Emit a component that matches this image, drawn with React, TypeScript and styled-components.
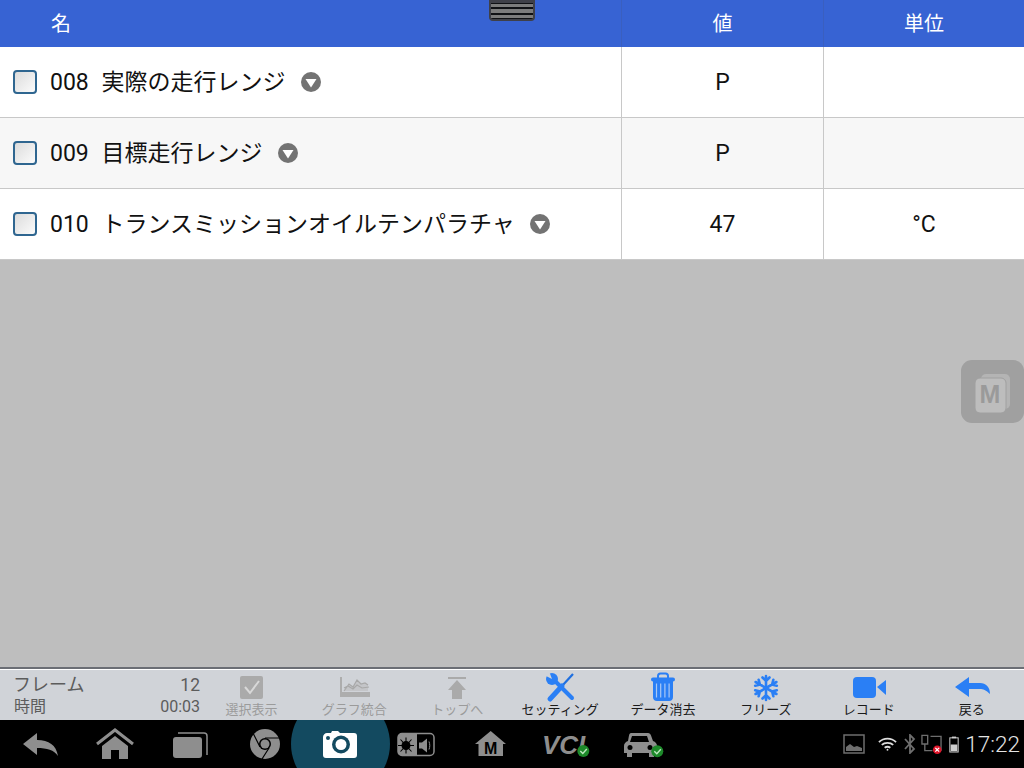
import React from 'react';
import styled, { createGlobalStyle } from 'styled-components';

const GlobalStyle = createGlobalStyle`
  html, body { margin: 0; padding: 0; }
  body {
    width: 1024px;
    height: 768px;
    overflow: hidden;
    font-family: Roboto, "Noto Sans CJK JP", sans-serif;
  }
`;

const Screen = styled.div`
  position: relative;
  width: 1024px;
  height: 768px;
  display: flex;
  flex-direction: column;
  background: #bebebe;
  overflow: hidden;
`;

const COLS = '621px 202px 201px';

const HeaderRow = styled.div`
  display: grid;
  grid-template-columns: ${COLS};
  height: 47px;
  background: #3763d3;
  color: #fff;
  font-size: 20px;
  line-height: 49px;
`;

const HeaderName = styled.div`
  padding-left: 51px;
`;

const HeaderCell = styled.div`
  text-align: center;
  border-left: 1px solid #3a5fbf;
`;

const Handle = styled.div`
  position: absolute;
  left: 489px;
  top: 0;
  width: 46px;
  height: 21px;
  box-sizing: border-box;
  border: solid #3f4048;
  border-width: 3px 2px 2px;
  border-radius: 0 0 4px 4px;
  background: #101114;
  padding: 1px 0;
  display: flex;
  flex-direction: column;
  gap: 2px;
`;

const HandleBar = styled.div`
  flex: 1;
  background: #7c7c7c;
`;

const Row = styled.div<{ $alt?: boolean }>`
  display: grid;
  grid-template-columns: ${COLS};
  height: 71px;
  box-sizing: border-box;
  background: ${p => (p.$alt ? '#f7f7f7' : '#fff')};
  border-bottom: 1px solid #c8c8c8;
  color: #111;
  font-size: 23px;
`;

const NameCell = styled.div`
  display: flex;
  align-items: center;
  padding-left: 13px;
`;

const Check = styled.div`
  width: 24px;
  height: 24px;
  box-sizing: border-box;
  border: 2px solid #2f6690;
  border-radius: 4px;
  background: linear-gradient(135deg, #dcdcdc, #fbfbfb);
  margin-right: 13px;
`;

const RowText = styled.div`
  display: flex;
  align-items: baseline;
  line-height: 30px;
  padding-top: 1px;
`;

const Num = styled.span`
  width: 51.5px;
  white-space: nowrap;
`;

const Label = styled.span`
  white-space: nowrap;
`;

const Drop = styled.svg`
  width: 20px;
  height: 20px;
  margin-left: 15px;
`;

const ValueCell = styled.div`
  display: flex;
  align-items: center;
  justify-content: center;
  border-left: 1px solid #c8c8c8;
  padding-top: 1px;
`;

const Floater = styled.div`
  position: absolute;
  left: 961px;
  top: 360px;
  width: 63px;
  height: 63px;
  border-radius: 11px;
  background: #a0a0a0;
`;

const FloaterLetter = styled.text`
  font-family: "Liberation Sans", sans-serif;
  font-weight: 700;
  font-size: 25px;
  fill: #9a9a9a;
`;

const Spacer = styled.div`
  flex: 1;
`;

const Toolbar = styled.div`
  height: 53px;
  box-sizing: border-box;
  display: flex;
  background: #d0d3d8;
  border-top: 2px solid #6b6e75;
  box-shadow: inset 0 1px 0 #fff;
  padding-top: 1px;
`;

const Stats = styled.div`
  width: 200px;
  box-sizing: border-box;
  padding: 4px 0 0 14px;
  display: grid;
  grid-template-columns: 1fr auto;
  grid-auto-rows: 22px;
  line-height: 22px;
  align-items: center;
  color: #5c5c5c;
  font-size: 16px;
`;

const StatTitle = styled.span`
  font-size: 18px;
  margin-left: -1px;
`;

const StatValue = styled.span<{ $big?: boolean }>`
  justify-self: end;
  font-size: ${p => (p.$big ? '17.5px' : '16px')};
`;

const Tool = styled.div<{ $off?: boolean }>`
  width: 102.9px;
  display: flex;
  flex-direction: column;
  align-items: center;
  color: ${p => (p.$off ? '#9b9b9b' : '#1a1a1a')};
  font-size: 13px;
  line-height: 15px;
  white-space: nowrap;
`;

const ToolIcon = styled.svg`
  width: 36px;
  height: 30px;
  margin-top: 2px;
  overflow: visible;
`;

const NavBar = styled.div`
  height: 48px;
  background: #000;
  display: flex;
  align-items: center;
  position: relative;
  overflow: hidden;
  padding-left: 2.5px;
  color: #8e8e8e;
`;

const NavSlot = styled.div`
  width: 75px;
  height: 48px;
  display: flex;
  align-items: center;
  justify-content: center;
  position: relative;
`;

const Glow = styled.div`
  position: absolute;
  left: 291px;
  top: -26px;
  width: 99px;
  height: 100px;
  border-radius: 50%;
  background: #134a60;
`;

const NavIcon = styled.svg`
  width: 44px;
  height: 36px;
  position: relative;
  overflow: visible;
`;

const NavText = styled.text<{ $size: number; $italic?: boolean }>`
  font-family: "Liberation Sans", sans-serif;
  font-weight: 700;
  font-size: ${p => p.$size}px;
  font-style: ${p => (p.$italic ? 'italic' : 'normal')};
`;

const Status = styled.div`
  margin-left: auto;
  display: flex;
  align-items: center;
  padding-right: 4px;
  color: #8a8a8a;
`;

const StatusIcon = styled.svg<{ $left: number }>`
  margin-left: ${p => p.$left}px;
`;

const Clock = styled.span`
  color: #e4e4e4;
  font-size: 22.5px;
  font-weight: 300;
  margin-left: 6px;
`;

const rows = [
  { num: '008', name: '実際の走行レンジ', value: 'P', unit: '' },
  { num: '009', name: '目標走行レンジ', value: 'P', unit: '' },
  { num: '010', name: 'トランスミッションオイルテンパラチャ', value: '47', unit: '°C' },
];

const BLUE = '#2a7ff5';
const TOOL_BG = '#d0d3d8';

export default function App() {
  return (
    <Screen>
      <GlobalStyle />
      <HeaderRow>
        <HeaderName>名</HeaderName>
        <HeaderCell>値</HeaderCell>
        <HeaderCell>単位</HeaderCell>
      </HeaderRow>
      {rows.map((r, i) => (
        <Row key={r.num} $alt={i === 1}>
          <NameCell>
            <Check />
            <RowText>
              <Num>{r.num}</Num>
              <Label>{r.name}</Label>
            </RowText>
            <Drop viewBox="0 0 20 20">
              <circle cx="10" cy="10" r="10" fill="#737373" />
              <path d="M4.500 7h11L10 15.500z" fill="#fff" />
            </Drop>
          </NameCell>
          <ValueCell>{r.value}</ValueCell>
          <ValueCell>{r.unit}</ValueCell>
        </Row>
      ))}
      <Spacer />
      <Toolbar>
        <Stats>
          <StatTitle>フレーム</StatTitle>
          <StatValue $big>12</StatValue>
          <span>時間</span>
          <StatValue>00:03</StatValue>
        </Stats>
        <Tool $off>
          <ToolIcon viewBox="0 0 36 30">
            <rect x="7" y="4" width="23" height="23" rx="2" fill="#aaa" />
            <path d="M12 15l5 6 9-12" fill="none" stroke="#d8d8d8" strokeWidth="2" />
          </ToolIcon>
          選択表示
        </Tool>
        <Tool $off>
          <ToolIcon viewBox="0 0 36 30">
            <path d="M4 5h2v15h28v5H4z" fill="#adadad" />
            <path d="M8 19l5-7 4 3 4-7 4 4 4-1 3 2v6z" fill="#c4c5c8" />
            <path d="M8 19l5-7 4 3 4-7 4 4 4-1 3 2M8 16l4-2 5 3 4-4 5 3 7-1" fill="none" stroke="#a8a8a8" strokeWidth="1.200" />
          </ToolIcon>
          グラフ統合
        </Tool>
        <Tool $off>
          <ToolIcon viewBox="0 0 36 30">
            <path d="M9 5h18v2H9zM18 8l9 10h-4v9H13v-9H9z" fill="#aaa" />
          </ToolIcon>
          トップへ
        </Tool>
        <Tool>
          <ToolIcon viewBox="0 0 36 30">
            <path d="M31 2L20 14" stroke="#1f6fe0" strokeWidth="2.200" />
            <path d="M20 14L8 27" stroke={BLUE} strokeWidth="5" strokeLinecap="round" />
            <path d="M14 10l16 16" stroke={BLUE} strokeWidth="4" strokeLinecap="round" />
            <circle cx="10" cy="7" r="6" fill={BLUE} />
            <path d="M10 7L7-1 2 3z" fill={TOOL_BG} />
          </ToolIcon>
          セッティング
        </Tool>
        <Tool>
          <ToolIcon viewBox="0 0 36 30">
            <path d="M13 7V4c0-1.500 1-2.500 2.500-2.500h5c1.500 0 2.500 1 2.500 2.500v3" fill="none" stroke={BLUE} strokeWidth="2" />
            <rect x="6" y="5.500" width="24" height="4" rx="2" fill={BLUE} />
            <path d="M8 9h20v16c0 2.500-1.500 4-4 4H12c-2.500 0-4-1.500-4-4z" fill={BLUE} />
            <path d="M11.500 11.500v14M15.700 11.500v14M19.900 11.500v14M24.100 11.500v14" stroke="#a8c8f5" strokeWidth="1.200" />
          </ToolIcon>
          データ消去
        </Tool>
        <Tool>
          <ToolIcon viewBox="0 0 36 30">
            <g stroke={BLUE} strokeWidth="2.600" fill="none" strokeLinecap="round">
              {[0, 60, 120].map(a => (
                <g key={a} transform={`rotate(${a} 18 16)`}>
                  <path d="M18 4v24M14.500 5.500l3.500 3.500 3.500-3.500M14.500 26.500l3.500-3.500 3.500 3.500" />
                </g>
              ))}
            </g>
          </ToolIcon>
          フリーズ
        </Tool>
        <Tool>
          <ToolIcon viewBox="0 0 36 30">
            <rect x="2" y="5" width="23" height="21" rx="4" fill={BLUE} />
            <path d="M26 15l9-7v15z" fill={BLUE} />
          </ToolIcon>
          レコード
        </Tool>
        <Tool>
          <ToolIcon viewBox="0 0 36 30">
            <path d="M1 15L15 5v6h11c6 0 10 4 10 11-4-4-7-5-10-5H15v8z" fill={BLUE} />
          </ToolIcon>
          戻る
        </Tool>
      </Toolbar>
      <NavBar>
        <Glow />
        <NavSlot>
          <NavIcon viewBox="0 0 44 36">
            <path d="M5 18L19 7v7c12 0 19 5 21 16-4-6-11-8-21-8v7z" fill="currentColor" />
          </NavIcon>
        </NavSlot>
        <NavSlot>
          <NavIcon viewBox="0 0 44 36">
            <path d="M4 18L22 4l18 14" fill="none" stroke="currentColor" strokeWidth="3" />
            <path d="M22 10l13 10v13H26v-9h-8v9H9V20z" fill="currentColor" />
          </NavIcon>
        </NavSlot>
        <NavSlot>
          <NavIcon viewBox="0 0 44 36">
            <rect x="5" y="11" width="29" height="21" rx="3" fill="currentColor" />
            <path d="M10 7h26c2 0 3 1 3 3v19" fill="none" stroke="currentColor" strokeWidth="1.500" />
          </NavIcon>
        </NavSlot>
        <NavSlot>
          <NavIcon viewBox="0 0 44 36">
            <circle cx="22" cy="18" r="15" fill="currentColor" />
            <circle cx="22" cy="18" r="6" fill="#000" />
            <circle cx="22" cy="18" r="4.500" fill="currentColor" />
            <path d="M22 12h14M17 21L10 7M26 22l-7 11" stroke="#000" strokeWidth="1.200" />
          </NavIcon>
        </NavSlot>
        <NavSlot>
          <NavIcon viewBox="0 0 44 36">
            <path d="M9 7h4l1-2h6l2 2h14c2 0 3 1 3 3v19c0 2-1 3-3 3H8c-2 0-3-1-3-3V11c0-2 2-4 4-4z" fill="#fff" />
            <circle cx="23" cy="18.500" r="9" fill="#134a60" />
            <circle cx="23" cy="18.500" r="5.500" fill="#fff" />
            <circle cx="10" cy="12" r="2" fill="#134a60" />
          </NavIcon>
        </NavSlot>
        <NavSlot>
          <NavIcon viewBox="0 0 44 36">
            <rect x="5" y="7.500" width="36" height="22" rx="4" fill="#000" stroke="currentColor" strokeWidth="1.500" />
            <path d="M9 7.500h15v22H9a4 4 0 0 1-4-4v-14a4 4 0 0 1 4-4z" fill="currentColor" />
            <path d="M13 11.500v16M5 19.500h16M7.500 13.500l11 12M18.500 13.500l-11 12" stroke="#000" strokeWidth="1.100" />
            <circle cx="13" cy="19.500" r="4.500" fill="#000" />
            <path d="M26 16.500h3l5-4v14l-5-4h-3z" fill="currentColor" />
            <path d="M36 15.500c1 2.500 1 5.500 0 8" fill="none" stroke="currentColor" strokeWidth="1" />
          </NavIcon>
        </NavSlot>
        <NavSlot>
          <NavIcon viewBox="0 0 44 36">
            <path d="M22.700 5L38 18h-3v12H10.500V18H7z" fill="currentColor" />
            <NavText $size={16} x="22.700" y="28" textAnchor="middle" fill="#000">M</NavText>
          </NavIcon>
        </NavSlot>
        <NavSlot>
          <NavIcon viewBox="0 0 44 36">
            <NavText $size={26} $italic x="-1" y="28" fill="currentColor">VCI</NavText>
            <circle cx="40.300" cy="25" r="6" fill="#1d8a2a" />
            <path d="M37.300 25l2.500 2.500 4-4.500" fill="none" stroke="#bfe8c0" strokeWidth="1.400" />
          </NavIcon>
        </NavSlot>
        <NavSlot>
          <NavIcon viewBox="0 0 44 36">
            <path d="M13 7h17c1.500 0 2.500 1 3 2.500l2 5.500c2.500 1 4 2.500 4 5v7h-3v4h-5v-4H14v4H9v-4H6v-7c0-2.500 1.500-4 4-5l1-5.500C11.300 8 12 7 13 7z" fill="currentColor" />
            <path d="M14 10h15l2 6H12z" fill="#000" />
            <circle cx="12" cy="21.500" r="2.500" fill="#000" />
            <circle cx="32" cy="21.500" r="2.500" fill="#000" />
            <circle cx="39.300" cy="25.300" r="6" fill="#1d8a2a" />
            <path d="M36.300 25.300l2.500 2.500 4-4.500" fill="none" stroke="#bfe8c0" strokeWidth="1.400" />
          </NavIcon>
        </NavSlot>
        <Status>
          <StatusIcon $left={0} width="22" height="20" viewBox="0 0 22 20">
            <rect x="1" y="1" width="20" height="18" fill="none" stroke="#6e6e6e" strokeWidth="1.500" />
            <path d="M3 17v-4l4-3 4 3 3-1 5 2v3z" fill="#6e6e6e" />
          </StatusIcon>
          <StatusIcon $left={13} width="19" height="14" viewBox="0 0 20 14">
            <path d="M1 5c5-5 13-5 18 0M4 8c3-3 9-3 12 0M7 11c2-1.500 4-1.500 6 0" fill="none" stroke="#ddd" strokeWidth="1.900" />
            <circle cx="10" cy="13" r="1" fill="#ddd" />
          </StatusIcon>
          <StatusIcon $left={7} width="12" height="20" viewBox="0 0 12 20">
            <path d="M1 5l9 10-4 4V1l4 4-9 10" fill="none" stroke="#6e6e6e" strokeWidth="1.800" />
          </StatusIcon>
          <StatusIcon $left={5} width="21" height="22" viewBox="0 0 22 22">
            <path d="M1 2h6v9H1zM10 3h11v15M4 11v7h8" fill="none" stroke="#6e6e6e" strokeWidth="1.400" />
            <circle cx="17" cy="17" r="4.500" fill="#e0162b" />
            <path d="M15 15l4 4M19 15l-4 4" stroke="#fff" strokeWidth="1.300" />
          </StatusIcon>
          <StatusIcon $left={7} width="10" height="19" viewBox="0 0 12 20">
            <rect x="1" y="2" width="10" height="17" fill="none" stroke="#cfcfcf" strokeWidth="1.200" />
            <rect x="3.500" y="0.500" width="5" height="2" fill="#cfcfcf" />
            <rect x="2" y="10" width="8" height="8" fill="#cfcfcf" />
          </StatusIcon>
          <Clock>17:22</Clock>
        </Status>
      </NavBar>
      <Handle>
        <HandleBar />
        <HandleBar />
        <HandleBar />
      </Handle>
      <Floater>
        <svg width="63" height="63" viewBox="0 0 63 63">
          <rect x="20" y="14" width="29" height="35" rx="5" fill="#b4b4b4" />
          <rect x="14" y="18" width="31" height="35" rx="5" fill="#bdbdbd" stroke="#a0a0a0" strokeWidth="1" />
          <FloaterLetter x="29" y="43" textAnchor="middle">M</FloaterLetter>
        </svg>
      </Floater>
    </Screen>
  );
}
